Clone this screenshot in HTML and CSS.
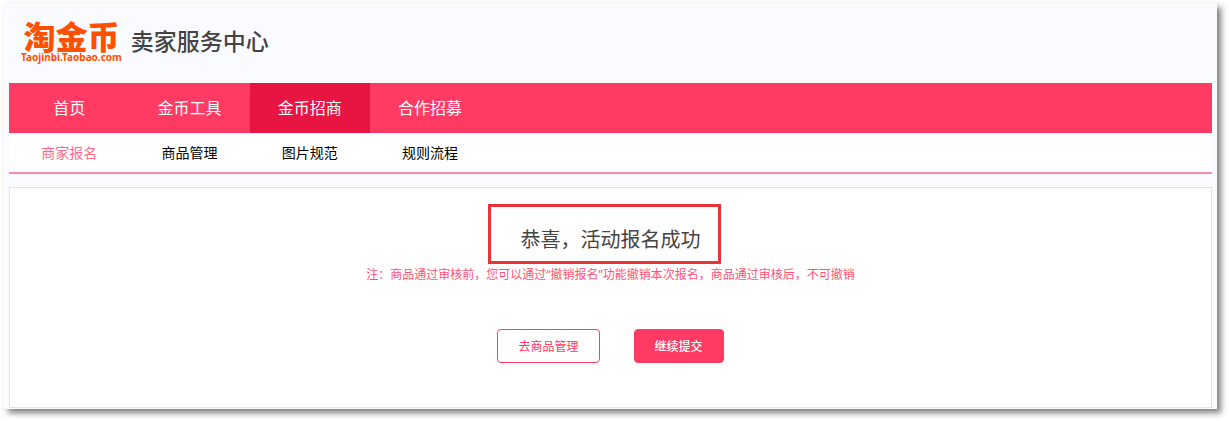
FILE: index.html
```html
<!DOCTYPE html>
<html lang="zh-CN">
<head>
    <meta charset="utf-8">
    <title>淘金币卖家服务中心</title>
    <link rel="stylesheet" href="styles.css">
</head>
<body>
    <div class="page">
        <header class="header">
            <a class="logo" href="#">
                <span class="logo-name">淘金币</span>
                <span class="logo-domain">Taojinbi.Taobao.com</span>
            </a>
            <span class="site-title">卖家服务中心</span>
        </header>
        <nav class="nav">
            <a href="#">首页</a>
            <a href="#">金币工具</a>
            <a class="active" href="#">金币招商</a>
            <a href="#">合作招募</a>
        </nav>
        <nav class="subnav">
            <a class="active" href="#">商家报名</a>
            <a href="#">商品管理</a>
            <a href="#">图片规范</a>
            <a href="#">规则流程</a>
        </nav>
        <main class="panel">
            <h1 class="result">恭喜，活动报名成功</h1>
            <p class="note">注：商品通过审核前，您可以通过“撤销报名”功能撤销本次报名，商品通过审核后，不可撤销</p>
            <div class="actions">
                <button class="btn" type="button">去商品管理</button>
                <button class="btn btn-primary" type="button">继续提交</button>
            </div>
        </main>
    </div>
</body>
</html>
```

FILE: styles.css
```css
* {
    box-sizing: border-box;
}

body {
    margin: 0;
    padding: 3px 12px 12px 4px;
    background: #fff;
    font-family: "Open Sans", "Noto Sans CJK SC", sans-serif;
}

a {
    text-decoration: none;
}

.page {
    padding: 0 5px 1px;
    background: #fafbff;
    box-shadow: 4px 4px 6px rgba(0, 0, 0, 0.5);
}

.header {
    display: flex;
    align-items: center;
    gap: 9px;
    height: 80px;
    padding: 0 12px 4px;
}

.logo {
    display: flex;
    flex-direction: column;
    align-items: center;
    color: #ff5000;
}

.logo-name {
    font-family: "Noto Sans CJK SC", sans-serif;
    font-size: 32px;
    font-weight: 900;
    line-height: 32px;
}

.logo-domain {
    font-family: "Noto Sans", sans-serif;
    font-size: 10px;
    font-weight: bold;
    line-height: 12px;
}

.site-title {
    color: #444;
    font-size: 23px;
    font-weight: 500;
    line-height: 32px;
}

.nav,
.subnav {
    display: flex;
}

.nav a,
.subnav a {
    width: 10%;
    text-align: center;
}

.nav {
    background: #ff3a63;
}

.nav a {
    color: #fff;
    font-size: 16px;
    line-height: 50px;
}

.nav .active {
    background: #e81442;
}

.subnav {
    background: #fff;
    border-bottom: 2px solid #f58ba8;
}

.subnav a {
    color: #000;
    font-size: 14px;
    line-height: 39px;
}

.subnav .active {
    color: #ff6a8a;
}

.panel {
    display: flex;
    flex-direction: column;
    align-items: center;
    margin-top: 13px;
    padding: 36px 0 44px;
    background: #fff;
    border: 1px solid #e0e2ec;
}

.result {
    position: relative;
    margin: 0;
    color: #444;
    font-size: 20px;
    font-weight: normal;
    line-height: 32px;
}

/* red frame around the result message */
.result::before {
    content: '';
    position: absolute;
    top: -20px;
    right: -20px;
    bottom: -8px;
    left: -33px;
    border: 3px solid #ec3338;
}

.note {
    margin: 9px 0 0;
    color: #ff5277;
    font-size: 12px;
    line-height: 20px;
}

.actions {
    display: flex;
    gap: 34px;
    margin-top: 44px;
}

.btn {
    padding: 2px 20px 0;
    background: #fff;
    border: 1px solid #ff3a63;
    border-radius: 4px;
    color: #ff3a63;
    font-family: inherit;
    font-size: 12px;
    line-height: 30px;
    cursor: pointer;
}

.btn-primary {
    background: #ff3a63;
    color: #fff;
    font-weight: 500;
}
```
